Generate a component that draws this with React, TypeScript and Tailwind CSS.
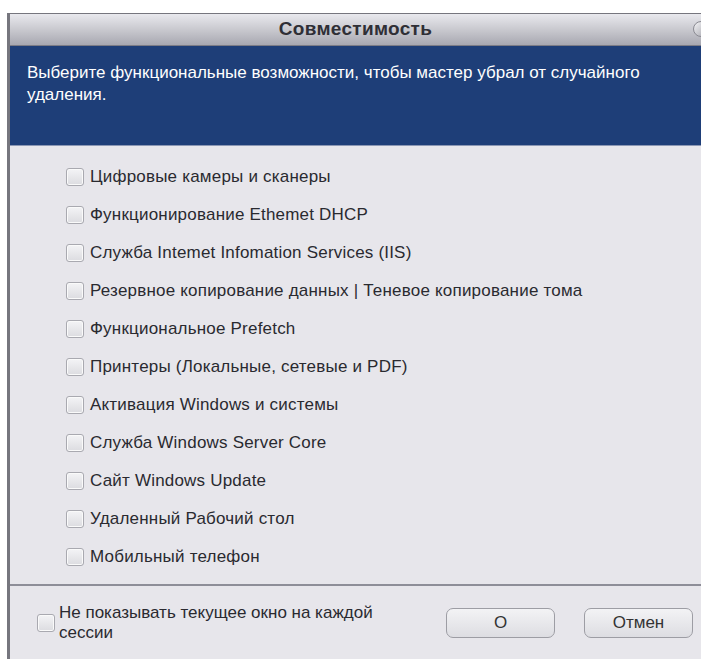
const features = [
  "Цифровые камеры и сканеры",
  "Функционирование Ethemet DHCP",
  "Служба Intemet Infomation Services (IIS)",
  "Резервное копирование данных | Теневое копирование тома",
  "Функциональное Prefetch",
  "Принтеры (Локальные, сетевые и PDF)",
  "Активация Windows и системы",
  "Служба Windows Server Core",
  "Сайт Windows Update",
  "Удаленный Рабочий стол",
  "Мобильный телефон",
];

function Box() {
  return (
    <span className="h-[18px] w-[18px] shrink-0 rounded-[3px] border border-[#a9a9b0] bg-gradient-to-b from-[#f4f4f6] to-[#dcdce0] shadow-[inset_0_0_0_1px_#fafafa]" />
  );
}

function Button({ label }: { label: string }) {
  return (
    <button
      type="button"
      className="h-[30px] w-[109px] rounded-[7px] border border-[#9d9da4] bg-gradient-to-b from-[#f3f3f5] to-[#dddde2] text-[17px] text-[#333]"
    >
      {label}
    </button>
  );
}

export default function App() {
  return (
    <div
      className="h-[659px] w-[701px] overflow-hidden bg-white pl-[7px] pt-[13px]"
      style={{ fontFamily: "'Liberation Sans', Arial, sans-serif" }}
    >
      <div className="flex h-[646px] flex-col border-l-[3px] border-t border-[#76767e] bg-[#e7e6eb]">
        <div className="relative flex h-[32px] items-center justify-center border-b border-[#7c7c86] bg-gradient-to-b from-[#e9e9ee] via-[#c9c9cf] to-[#a8a8b1]">
          <span className="text-[19px] font-bold tracking-[0.3px] text-[#2f2f36]">Совместимость</span>
          <span className="absolute right-[-8px] top-[7px] h-[16px] w-[16px] rounded-full border border-[#8a8a92] bg-gradient-to-br from-[#f4f4f6] to-[#a5a5ad]" />
        </div>
        <div className="h-[100px] border-b border-[#8b97b4] bg-[#1e3e78] pl-[17px] pr-[20px] pt-[16px] text-[17px] leading-[22px] text-white">
          Выберите функциональные возможности, чтобы мастер убрал от случайного удаления.
        </div>
        <div className="flex flex-col gap-[20px] px-[56px] pt-[22px]">
          {features.map((f) => (
            <label key={f} className="flex h-[18px] items-center gap-[6px] text-[17px] tracking-[0.2px] text-[#2a2a30]">
              <Box />
              <span>{f}</span>
            </label>
          ))}
        </div>
        <div className="mt-auto flex h-[75px] items-center border-t-2 border-[#8e8e98] pl-[27px] pr-[8px]">
          <label className="flex items-center gap-[4px] text-[17px] leading-[20px] text-[#2a2a30]">
            <Box />
            <span className="w-[340px]">Не показывать текущее окно на каждой сессии</span>
          </label>
          <div className="ml-auto flex gap-[29px]">
            <Button label="О" />
            <Button label="Отмен" />
          </div>
        </div>
      </div>
    </div>
  );
}
